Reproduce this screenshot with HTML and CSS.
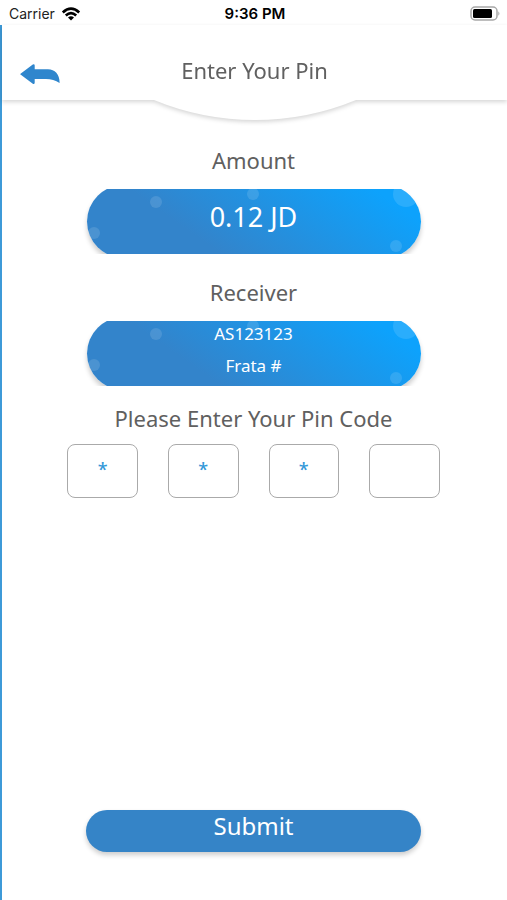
FILE: index.html
```html
<!DOCTYPE html>
<html lang="en">
<head>
<meta charset="utf-8">
<meta name="viewport" content="width=device-width, initial-scale=1">
<title>Enter Your Pin</title>
<link rel="stylesheet" href="styles.css">
</head>
<body>
<div class="status">
  <div class="carrier">
    <span>Carrier</span>
    <svg width="20" height="14" viewBox="0 0 20 14" fill="none" stroke="#000" stroke-width="2.7" aria-hidden="true">
      <path d="M1.8 5.4Q10-2 18.2 5.4"/>
      <path d="M4.8 8.5Q10 3.8 15.2 8.5"/>
      <path d="M7 10.5Q10 8 13 10.5L10 13.6Z" fill="#000" stroke="none"/>
    </svg>
  </div>
  <div class="time">9:36 PM</div>
  <svg class="battery" width="31" height="16" viewBox="0 0 31 16" aria-hidden="true">
    <rect x="1" y="1" width="26" height="13" rx="4" fill="#fff" stroke="#a8a8a8" stroke-width="1.5"/>
    <rect x="3" y="3" width="19" height="9" rx="1.5" fill="#000"/>
    <path d="M28.3 5.2Q30.6 7.5 28.3 9.8Z" fill="#a8a8a8"/>
  </svg>
</div>
<div class="screen">
  <header class="header">
    <button class="back" type="button" aria-label="Back">
      <svg width="40" height="21" viewBox="0 0 40 21" aria-hidden="true">
        <path d="M.5 9.7 12.8.5Q14.6-.3 14.7 1.6V5.3H28C35 5.3 39.8 10.5 39.6 19Q33.5 15 26 15H14.7V18.8Q14.5 20.7 12.8 19.8L.5 10.6Q0 10.2.5 9.7Z" fill="#2f86cd"/>
      </svg>
    </button>
    <h1 class="title">Enter Your Pin</h1>
    <svg class="curve" viewBox="0 0 200 20" preserveAspectRatio="none" aria-hidden="true"><path d="M0 0Q48 20 100 20T200 0Z" fill="#fff"/></svg>
  </header>
  <main class="content">
    <h2 class="label">Amount</h2>
    <div class="card">
      <svg class="bubbles" viewBox="0 0 334 73" preserveAspectRatio="xMidYMid slice" aria-hidden="true">
        <g fill="#fff" fill-opacity=".12"><circle cx="69" cy="17" r="6"/><circle cx="7" cy="48" r="6"/><circle cx="166" cy="9" r="6"/><circle cx="319" cy="9" r="13"/><circle cx="309" cy="61" r="6"/></g>
      </svg>
      <p class="amount">0.12 JD</p>
    </div>
    <h2 class="label">Receiver</h2>
    <div class="card">
      <svg class="bubbles" viewBox="0 0 334 73" preserveAspectRatio="xMidYMid slice" aria-hidden="true">
        <g fill="#fff" fill-opacity=".12"><circle cx="69" cy="17" r="6"/><circle cx="7" cy="48" r="6"/><circle cx="166" cy="9" r="6"/><circle cx="319" cy="9" r="13"/><circle cx="309" cy="61" r="6"/></g>
      </svg>
      <p class="receiver">AS123123</p>
      <p class="receiver">Frata #</p>
    </div>
    <form class="form">
      <h2 class="label">Please Enter Your Pin Code</h2>
      <div class="pins">
        <input class="pin" type="text" inputmode="numeric" maxlength="1" value="*" aria-label="Pin digit 1">
        <input class="pin" type="text" inputmode="numeric" maxlength="1" value="*" aria-label="Pin digit 2">
        <input class="pin" type="text" inputmode="numeric" maxlength="1" value="*" aria-label="Pin digit 3">
        <input class="pin" type="text" inputmode="numeric" maxlength="1" aria-label="Pin digit 4">
      </div>
      <button class="submit" type="submit">Submit</button>
    </form>
  </main>
</div>
</body>
</html>
```
FILE: styles.css
```css
* { box-sizing: border-box; }
body {
  margin: 0;
  min-height: 100vh;
  display: flex;
  flex-direction: column;
  background: #fff;
  font-family: "Noto Sans", sans-serif;
  color: #606060;
}
h1, h2, p { margin: 0; font-weight: 400; }
.status {
  display: grid;
  grid-template-columns: 1fr auto 1fr;
  align-items: center;
  height: 25px;
  padding: 2px 6px 0 9px;
  font-family: Inter, sans-serif;
  font-size: 14px;
  color: #222;
}
.carrier { display: flex; align-items: center; gap: 6px; }
.time { font-weight: 600; font-size: 15px; color: #000; }
.battery { justify-self: end; }
.screen {
  flex: 1;
  display: flex;
  flex-direction: column;
  border-left: 2px solid #3d9ad8;
}
.header {
  position: relative;
  display: grid;
  grid-template-columns: 1fr auto 1fr;
  align-items: center;
  height: 75px;
  padding: 14px 18px 0;
  background: #fff;
  filter: drop-shadow(0 2px 2px rgba(0, 0, 0, .16));
}
.back {
  justify-self: start;
  display: flex;
  margin-top: 10px;
  padding: 0;
  border: 0;
  background: none;
}
.title { font-size: 22px; line-height: 32px; }
.curve {
  position: absolute;
  top: 100%;
  left: 50%;
  width: 40%;
  height: 20px;
  transform: translateX(-50%);
}
.content {
  flex: 1;
  display: flex;
  flex-direction: column;
  align-items: center;
  padding: 44px 2px 48px 0;
}
.label { font-size: 22px; line-height: 32px; text-align: center; }
/* The pill is taller than its visible band; its top and bottom are trimmed flat. */
.card {
  position: relative;
  width: 334px;
  max-width: 90%;
  height: 73px;
  margin: 9px 0 18px;
  padding-top: 4px;
  border-radius: 37px;
  background: linear-gradient(35deg, #3384cb 32%, #0da2fc 88%);
  box-shadow: 0 4px 5px rgba(0, 0, 0, .2);
  clip-path: inset(4px -10px);
  text-align: center;
  color: #fff;
}
.bubbles {
  position: absolute;
  inset: 0;
  width: 100%;
  height: 100%;
  border-radius: 37px;
}
.amount { position: relative; font-size: 27px; line-height: 55px; }
.receiver { position: relative; font-size: 17px; line-height: 32px; margin-top: -3px; }
.receiver + .receiver { margin-top: 0; }
.form {
  flex: 1;
  width: 100%;
  margin-top: -6px;
  display: flex;
  flex-direction: column;
  align-items: center;
}
.pins {
  display: grid;
  grid-template-columns: repeat(4, 1fr);
  gap: 30px;
  width: 74%;
  margin-top: 10px;
}
.pin {
  min-width: 0;
  height: 54px;
  padding: 0 0 4px;
  border: 1px solid #aaa;
  border-radius: 8px;
  background: #fff;
  font: 500 18px "Noto Sans", sans-serif;
  text-align: center;
  color: #3398d8;
}
.submit {
  width: 335px;
  max-width: 90%;
  height: 42px;
  margin-top: auto;
  padding: 0 0 10px;
  border: 0;
  border-radius: 21px;
  background: #3584c7;
  box-shadow: 0 3px 5px rgba(0, 0, 0, .2);
  font: 24px/32px "Noto Sans", sans-serif;
  color: #fff;
}
```
